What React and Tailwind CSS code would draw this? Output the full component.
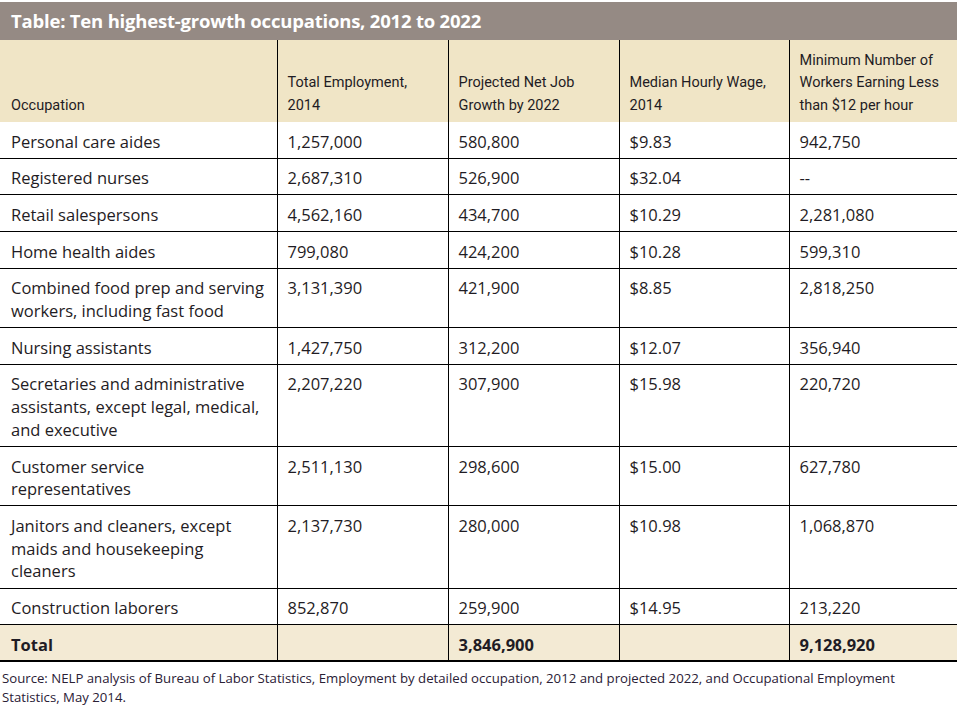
const rows = [
  ['Personal care aides', '1,257,000', '580,800', '$9.83', '942,750'],
  ['Registered nurses', '2,687,310', '526,900', '$32.04', '--'],
  ['Retail salespersons', '4,562,160', '434,700', '$10.29', '2,281,080'],
  ['Home health aides', '799,080', '424,200', '$10.28', '599,310'],
  ['Combined food prep and serving workers, including fast food', '3,131,390', '421,900', '$8.85', '2,818,250'],
  ['Nursing assistants', '1,427,750', '312,200', '$12.07', '356,940'],
  ['Secretaries and administrative assistants, except legal, medical, and executive', '2,207,220', '307,900', '$15.98', '220,720'],
  ['Customer service representatives', '2,511,130', '298,600', '$15.00', '627,780'],
  ['Janitors and cleaners, except maids and housekeeping cleaners', '2,137,730', '280,000', '$10.98', '1,068,870'],
  ['Construction laborers', '852,870', '259,900', '$14.95', '213,220'],
]

const headers = [
  'Occupation',
  'Total Employment, 2014',
  'Projected Net Job Growth by 2022',
  'Median Hourly Wage, 2014',
  'Minimum Number of Workers Earning Less than $12 per hour',
]

export default function App() {
  return (
    <div className="w-[957px] h-[713px] bg-white text-[#1f1c24] font-['Open_Sans',sans-serif] pt-[2px]">
      {/* Title bar */}
      <div className="h-[38px] bg-[#958a84] flex items-center pl-[11px]">
        <h1 className="text-white font-bold text-[18.5px] tracking-[-0.2px]">
          Table: Ten highest-growth occupations, 2012 to 2022
        </h1>
      </div>

      <table className="w-[957px] table-fixed border-collapse">
        <colgroup>
          <col className="w-[277px]" />
          <col className="w-[171px]" />
          <col className="w-[171px]" />
          <col className="w-[170px]" />
          <col className="w-[168px]" />
        </colgroup>
        <thead>
          <tr className="bg-[#f0e5c6] h-[82px]">
            {headers.map((h, i) => (
              <th
                key={h}
                className={`align-bottom text-left font-normal font-['Roboto',sans-serif] text-[14.5px] leading-[22.5px] pb-[5px] pr-[8px] ${
                  i === 0 ? 'pl-[11px]' : 'pl-[10px] border-l border-black'
                }`}
              >
                {h}
              </th>
            ))}
          </tr>
        </thead>
        <tbody>
          {rows.map((r) => (
            <tr key={r[0]} className="border-b border-black">
              {r.map((c, i) => (
                <td
                  key={i}
                  className={`align-top text-[16.5px] leading-[22.7px] pt-[8.5px] pb-[4.5px] pr-[10px] ${
                    i === 0 ? 'pl-[11px]' : 'pl-[10px] border-l border-black'
                  }`}
                >
                  {c}
                </td>
              ))}
            </tr>
          ))}
          <tr className="bg-[#f3ead4] border-b-2 border-black font-bold">
            {['Total', '', '3,846,900', '', '9,128,920'].map((c, i) => (
              <td
                key={i}
                className={`align-top text-[16.5px] leading-[22.7px] pt-[8.5px] pb-[4px] ${
                  i === 0 ? 'pl-[11px]' : 'pl-[10px] border-l border-black'
                }`}
              >
                {c}
              </td>
            ))}
          </tr>
        </tbody>
      </table>

      <p className="pl-[2px] pt-[7px] text-[13.2px] leading-[19px] text-[#2a2035]">
        Source: NELP analysis of Bureau of Labor Statistics, Employment by detailed occupation, 2012 and projected 2022, and Occupational Employment
        <br />
        Statistics, May 2014.
      </p>
    </div>
  )
}
